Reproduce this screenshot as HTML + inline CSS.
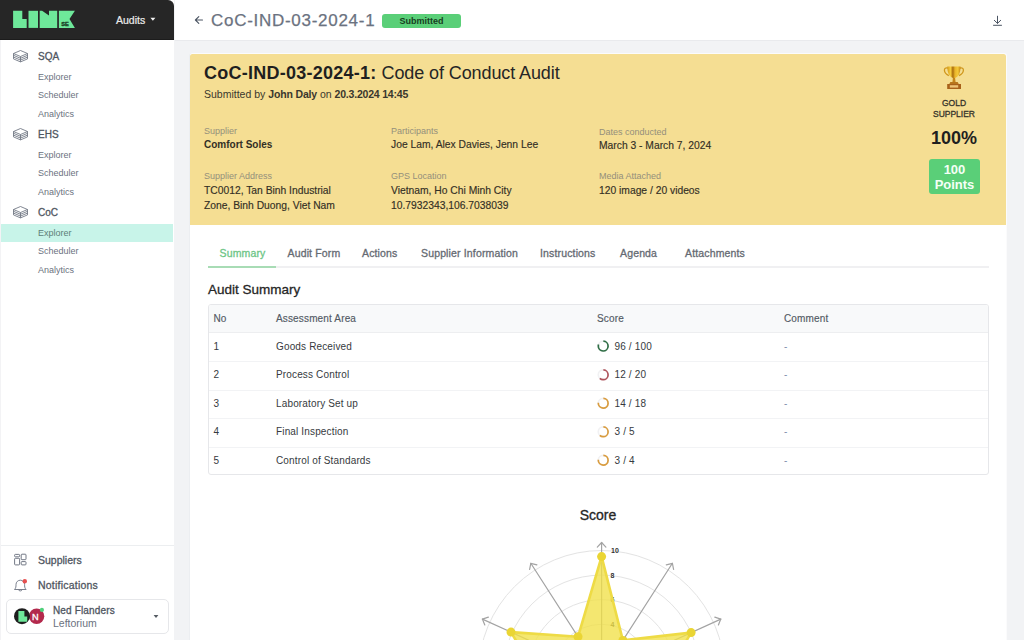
<!DOCTYPE html>
<html><head><meta charset="utf-8">
<style>
*{box-sizing:border-box;margin:0;padding:0}
html,body{width:1024px;height:640px;overflow:hidden;background:#f2f3f5;font-family:"Liberation Sans",sans-serif;position:relative}
.abs{position:absolute;white-space:nowrap}
#side{position:absolute;left:0;top:0;width:173.6px;height:640px;background:#fff;border-left:1px solid #f3f3f5}
#sidehead{position:absolute;left:-1px;top:0;width:174px;height:39.5px;background:#262626;border-bottom:1px solid #1c1c1c;border-top-right-radius:6px}
#topbar{position:absolute;left:175px;top:0;width:849px;height:41px;background:#fff;border-bottom:1px solid #e9eaed}
.grp{font-size:10px;color:#4f5661;-webkit-text-stroke:0.3px #4f5661}
.sub{font-size:9px;color:#6b7280}
#card{position:absolute;left:190px;top:54px;width:816px;height:171px;background:#f5de93;border-top-left-radius:2.5px;border-top-right-radius:2.5px}
#panel{position:absolute;left:189px;top:53px;width:818px;height:587px;background:#fbfbfc;border-left:1px solid #eceef1;border-top-left-radius:3px;border-top-right-radius:3px}
.lbl{font-size:9px;color:#948f7b}
.val{font-size:10.3px;color:#332f25;-webkit-text-stroke:0.15px #332f25}
.tab{font-size:10.5px;color:#656a72;letter-spacing:0.15px;-webkit-text-stroke:0.3px #656a72}
.th{font-size:10px;color:#535a64;letter-spacing:0.15px;-webkit-text-stroke:0.15px #535a64}
.td{font-size:10px;color:#363a40;letter-spacing:0.15px}
</style></head><body>

<div id="side">
  <div id="sidehead"></div>
</div>
<div id="topbar"></div>
<div id="panel"></div>
<div class="abs" style="left:190px;top:225px;width:816px;height:415px;background:#fff"></div>
<div id="card"></div>

<!-- logo -->
<svg class="abs" style="left:0;top:0" width="174" height="40" viewBox="0 0 174 40">
  <g fill="#6ee89a">
    <path d="M13.1,10.8 H22.3 V19 H26.7 V27.9 H13.1 Z"/>
    <rect x="28.5" y="10.8" width="9.5" height="17.1"/>
    <path d="M39.7,10.8 H42.1 L49,15.6 V10.8 H57.2 V27.9 H39.7 Z"/>
    <path d="M58.9,10.8 H74.9 L69.5,19 L74.9,27.9 H58.9 Z"/>
  </g>
  <text x="61.2" y="25.9" font-family="Liberation Sans" font-weight="bold" font-size="5.7" fill="#173a23" stroke="#173a23" stroke-width="0.35">SE</text>
  <text x="116" y="23.5" font-family="Liberation Sans" font-size="10.5" fill="#ececec" stroke="#ececec" stroke-width="0.2">Audits</text>
  <path d="M150.4,17.7 H155.4 L152.9,20.8 Z" fill="#f3f3f3"/>
</svg>

<!-- sidebar nav -->
<svg class="abs" style="left:13px;top:50px" width="16" height="14" viewBox="0 0 16 14"><g fill="none" stroke="#6b7280" stroke-width="0.85" stroke-linejoin="round"><path d="M7.5,0.5 L14.5,3.5 V8.9 L7.5,11.9 L0.5,8.9 V3.5 Z M0.5,3.5 L7.5,6.5 L14.5,3.5 M0.5,5.3 L7.5,8.3 L14.5,5.3 M0.5,7.1 L7.5,10.1 L14.5,7.1 M7.5,6.5 V11.9"/></g></svg>
<div class="abs grp" style="left:38px;top:51px">SQA</div>
<div class="abs sub" style="left:38px;top:71.7px">Explorer</div>
<div class="abs sub" style="left:38px;top:90.2px">Scheduler</div>
<div class="abs sub" style="left:38px;top:108.7px">Analytics</div>

<svg class="abs" style="left:13px;top:128px" width="16" height="14" viewBox="0 0 16 14"><g fill="none" stroke="#6b7280" stroke-width="0.85" stroke-linejoin="round"><path d="M7.5,0.5 L14.5,3.5 V8.9 L7.5,11.9 L0.5,8.9 V3.5 Z M0.5,3.5 L7.5,6.5 L14.5,3.5 M0.5,5.3 L7.5,8.3 L14.5,5.3 M0.5,7.1 L7.5,10.1 L14.5,7.1 M7.5,6.5 V11.9"/></g></svg>
<div class="abs grp" style="left:38px;top:129px">EHS</div>
<div class="abs sub" style="left:38px;top:149.7px">Explorer</div>
<div class="abs sub" style="left:38px;top:168.2px">Scheduler</div>
<div class="abs sub" style="left:38px;top:186.7px">Analytics</div>

<svg class="abs" style="left:13px;top:206px" width="16" height="14" viewBox="0 0 16 14"><g fill="none" stroke="#6b7280" stroke-width="0.85" stroke-linejoin="round"><path d="M7.5,0.5 L14.5,3.5 V8.9 L7.5,11.9 L0.5,8.9 V3.5 Z M0.5,3.5 L7.5,6.5 L14.5,3.5 M0.5,5.3 L7.5,8.3 L14.5,5.3 M0.5,7.1 L7.5,10.1 L14.5,7.1 M7.5,6.5 V11.9"/></g></svg>
<div class="abs grp" style="left:38px;top:207px">CoC</div>
<div class="abs" style="left:1px;top:224px;width:172.3px;height:18.2px;background:#c8f4e9"></div>
<div class="abs sub" style="left:38px;top:227.7px;color:#5d7f78">Explorer</div>
<div class="abs sub" style="left:38px;top:246.2px">Scheduler</div>
<div class="abs sub" style="left:38px;top:264.7px">Analytics</div>


<!-- sidebar bottom -->
<div class="abs" style="left:1px;top:545px;width:173px;height:1px;background:#eceef0"></div>
<svg class="abs" style="left:10px;top:550px" width="20" height="20" viewBox="10 550 20 20"><g fill="none" stroke="#6b7280" stroke-width="0.95"><rect x="14.6" y="554.4" width="5" height="2.4" rx="0.8"/><rect x="14.6" y="558.3" width="5" height="6.6" rx="0.8"/><rect x="21.2" y="554.2" width="4.8" height="5.5" rx="0.8"/><rect x="21.2" y="561.6" width="4.8" height="3.3" rx="0.8"/></g></svg>
<div class="abs grp" style="left:38px;top:554px;font-size:10.5px">Suppliers</div>
<svg class="abs" style="left:13px;top:578px" width="16" height="15" viewBox="0 0 16 15"><g fill="none" stroke="#6b7280" stroke-width="0.9" stroke-linejoin="round"><path d="M1.5,11.5 C3,10 3,8.5 3,6.5 C3,4 5,2.2 7.3,2.2 C9.6,2.2 11.6,4 11.6,6.5 C11.6,8.5 11.6,10 13.1,11.5 Z M5.6,11.8 C5.8,13.3 8.8,13.3 9,11.8"/></g><circle cx="11.8" cy="3.2" r="2.2" fill="#e65050"/></svg>
<div class="abs grp" style="left:38px;top:579px;font-size:10.5px;letter-spacing:0.22px">Notifications</div>
<div class="abs" style="left:6px;top:599px;width:163px;height:35px;border:1px solid #e6e7ea;border-radius:5px;background:#fff"></div>
<svg class="abs" style="left:12px;top:606px" width="40" height="20" viewBox="0 0 40 20">
  <circle cx="24.6" cy="10.2" r="7.7" fill="#b3294c"/>
  <circle cx="10" cy="10.2" r="8" fill="#1e1e1e"/>
  <path d="M6.4,5 H12.4 V10.4 H15.2 V15.8 H6.4 Z" fill="#6ee89a"/>
  <text x="23.2" y="13.6" text-anchor="middle" font-family="Liberation Sans" font-size="9.2" fill="#fff" stroke="#fff" stroke-width="0.3">N</text>
  <circle cx="29.9" cy="3.9" r="2.1" fill="#4fd07a"/>
</svg>
<div class="abs grp" style="left:53px;top:605px;letter-spacing:0.15px">Ned Flanders</div>
<div class="abs" style="left:53px;top:617px;font-size:10.5px;color:#6b7280">Leftorium</div>
<svg class="abs" style="left:152px;top:614px" width="8" height="5" viewBox="0 0 8 5"><path d="M1.6,1 H6.4 L4,4 Z" fill="#555b63"/></svg>

<!-- top bar -->
<svg class="abs" style="left:194px;top:15px" width="10" height="10" viewBox="0 0 10 10"><g fill="none" stroke="#4b5563" stroke-width="1.1" stroke-linecap="round" stroke-linejoin="round"><path d="M8.5,5 H1.5 M4.8,1.6 L1.4,5 L4.8,8.4"/></g></svg>
<div class="abs" style="left:211px;top:11px;font-size:17px;letter-spacing:0.72px;color:#6b7280;-webkit-text-stroke:0.25px #6b7280">CoC-IND-03-2024-1</div>
<div class="abs" style="left:382px;top:14px;width:79px;height:14px;background:#5acf78;border-radius:3px;font-size:9px;font-weight:bold;color:#183d22;text-align:center;line-height:14px">Submitted</div>
<svg class="abs" style="left:992px;top:15px" width="12" height="12" viewBox="0 0 12 12"><g fill="none" stroke="#4b5563" stroke-width="1" stroke-linecap="round" stroke-linejoin="round"><path d="M5.5,1.2 V8.2 M2.3,5.3 L5.5,8.4 L8.7,5.3 M1.5,10.3 H9.5"/></g></svg>

<!-- card -->
<div class="abs" style="left:204px;top:63px;font-size:18px;color:#1f1f1f"><b style="letter-spacing:0.25px">CoC-IND-03-2024-1:</b> <span style="letter-spacing:-0.1px;color:#262626">Code of Conduct Audit</span></div>
<div class="abs" style="left:204px;top:88px;font-size:10.5px;color:#3a372d">Submitted by <b style="letter-spacing:-0.15px">John Daly</b> on <b style="letter-spacing:-0.2px">20.3.2024 14:45</b></div>
<div class="abs lbl" style="left:204px;top:125.5px">Supplier</div>
<div class="abs val" style="left:204px;top:139px;font-weight:bold;font-size:10px;-webkit-text-stroke:0">Comfort Soles</div>
<div class="abs lbl" style="left:204px;top:171px">Supplier Address</div>
<div class="abs val" style="left:204px;top:183px;line-height:15.2px">TC0012, Tan Binh Industrial<br>Zone, Binh Duong, Viet Nam</div>

<div class="abs lbl" style="left:391px;top:125.5px">Participants</div>
<div class="abs val" style="left:391px;top:139px">Joe Lam, Alex Davies, Jenn Lee</div>
<div class="abs lbl" style="left:391px;top:171px">GPS Location</div>
<div class="abs val" style="left:391px;top:183px;line-height:15.2px">Vietnam, Ho Chi Minh City<br>10.7932343,106.7038039</div>

<div class="abs lbl" style="left:599px;top:126.5px">Dates conducted</div>
<div class="abs val" style="left:599px;top:140px">March 3 - March 7, 2024</div>
<div class="abs lbl" style="left:599px;top:171px">Media Attached</div>
<div class="abs val" style="left:599px;top:184.5px">120 image / 20 videos</div>

<svg class="abs" style="left:940px;top:62px" width="28" height="30" viewBox="940 62 28 30">
  <defs><linearGradient id="gold" x1="947.3" x2="960.5" y1="0" y2="0" gradientUnits="userSpaceOnUse"><stop offset="0" stop-color="#d49a18"/><stop offset="0.25" stop-color="#f6cd3e"/><stop offset="0.42" stop-color="#a86a0c"/><stop offset="0.58" stop-color="#e9b42a"/><stop offset="0.8" stop-color="#f4c93a"/><stop offset="1" stop-color="#c48612"/></linearGradient></defs>
  <path d="M948,68.2 C943.2,66.6 943,73 948.8,75.6" fill="none" stroke="#cf961c" stroke-width="1.3"/>
  <path d="M959.8,68.2 C964.6,66.6 964.8,73 959,75.6" fill="none" stroke="#cf961c" stroke-width="1.3"/>
  <path d="M947.3,66.4 H960.5 C960.5,73 958.6,77 954,78.3 C949.4,77 947.3,73 947.3,66.4 Z" fill="url(#gold)"/>
  <path d="M952.9,78 H955.1 L955.6,82.2 H952.4 Z" fill="#c4841a"/>
  <path d="M950.3,82 H957.7 L958.8,84.2 H949.2 Z" fill="#b8761c"/>
  <rect x="947.2" y="84" width="13.8" height="5" fill="#a9621a"/>
  <rect x="949.8" y="85.2" width="8.4" height="2.4" fill="#eec476"/>
</svg>
<div class="abs" style="left:904px;top:98px;width:100px;text-align:center;font-size:8.5px;line-height:11.3px;color:#35332a;-webkit-text-stroke:0.3px #35332a">GOLD<br>SUPPLIER</div>
<div class="abs" style="left:904px;top:127.7px;width:100px;text-align:center;font-size:18px;color:#1f1f1f;font-weight:bold">100%</div>
<div class="abs" style="left:929px;top:159px;width:51px;height:35px;background:#5acf78;border-radius:3px;text-align:center;font-size:13px;line-height:15.3px;padding-top:2.8px;color:#f4fff6;font-weight:bold">100<br>Points</div>

<!-- tabs -->
<div class="abs tab" style="left:219.5px;top:247px;color:#6cc585;-webkit-text-stroke:0.3px #6cc585">Summary</div>
<div class="abs tab" style="left:287.5px;top:247px">Audit Form</div>
<div class="abs tab" style="left:362px;top:247px">Actions</div>
<div class="abs tab" style="left:421px;top:247px">Supplier Information</div>
<div class="abs tab" style="left:540px;top:247px">Instructions</div>
<div class="abs tab" style="left:620px;top:247px">Agenda</div>
<div class="abs tab" style="left:685px;top:247px">Attachments</div>
<div class="abs" style="left:207.5px;top:266px;width:781px;height:1.5px;background:#f0f0f2"></div>
<div class="abs" style="left:207.5px;top:265.5px;width:68px;height:2px;background:#a8dcb5"></div>

<div class="abs" style="left:208px;top:282px;font-size:13.5px;color:#262626;-webkit-text-stroke:0.3px #262626">Audit Summary</div>

<!-- table -->
<div class="abs" style="left:207.5px;top:303.5px;width:781px;height:171px;border:1px solid #e6e7ea;border-radius:3px;overflow:hidden;background:#fff">
  <div style="position:absolute;left:0;top:0;width:100%;height:28.5px;background:#f8f9fa;border-bottom:1px solid #edeef0"></div>
  <div style="position:absolute;left:0;top:56.5px;width:100%;height:1px;background:#f2f3f5"></div>
  <div style="position:absolute;left:0;top:85px;width:100%;height:1px;background:#f2f3f5"></div>
  <div style="position:absolute;left:0;top:113.5px;width:100%;height:1px;background:#f2f3f5"></div>
  <div style="position:absolute;left:0;top:142px;width:100%;height:1px;background:#f2f3f5"></div>
</div>
<div class="abs th" style="left:213.5px;top:312.5px">No</div>
<div class="abs th" style="left:276px;top:312.5px">Assessment Area</div>
<div class="abs th" style="left:597px;top:312.5px">Score</div>
<div class="abs th" style="left:784px;top:312.5px">Comment</div>

<div class="abs td" style="left:213.5px;top:340.5px">1</div>
<div class="abs td" style="left:276px;top:340.5px">Goods Received</div>
<div class="abs td" style="left:614.5px;top:340.5px">96 / 100</div>
<div class="abs td" style="left:784px;top:340.5px;color:#7f90ad">-</div>
<div class="abs td" style="left:213.5px;top:369px">2</div>
<div class="abs td" style="left:276px;top:369px">Process Control</div>
<div class="abs td" style="left:614.5px;top:369px">12 / 20</div>
<div class="abs td" style="left:784px;top:369px;color:#7f90ad">-</div>
<div class="abs td" style="left:213.5px;top:397.5px">3</div>
<div class="abs td" style="left:276px;top:397.5px">Laboratory Set up</div>
<div class="abs td" style="left:614.5px;top:397.5px">14 / 18</div>
<div class="abs td" style="left:784px;top:397.5px;color:#7f90ad">-</div>
<div class="abs td" style="left:213.5px;top:426px">4</div>
<div class="abs td" style="left:276px;top:426px">Final Inspection</div>
<div class="abs td" style="left:614.5px;top:426px">3 / 5</div>
<div class="abs td" style="left:784px;top:426px;color:#7f90ad">-</div>
<div class="abs td" style="left:213.5px;top:454.5px">5</div>
<div class="abs td" style="left:276px;top:454.5px">Control of Standards</div>
<div class="abs td" style="left:614.5px;top:454.5px">3 / 4</div>
<div class="abs td" style="left:784px;top:454.5px;color:#7f90ad">-</div>

<svg class="abs" style="left:590px;top:333px" width="26" height="140" viewBox="590 333 26 140"><g fill="none" stroke-width="1.7">
<circle cx="603.2" cy="346.1" r="4.9" stroke="#f1f1f3"/><circle cx="603.2" cy="346.1" r="4.9" stroke="#2f6e45" stroke-dasharray="24.01 30.79" transform="rotate(-88 603.2 346.1)"/>
<circle cx="603.2" cy="374.8" r="4.9" stroke="#f1f1f3"/><circle cx="603.2" cy="374.8" r="4.9" stroke="#b0545c" stroke-dasharray="18.47 30.79" transform="rotate(-88 603.2 374.8)"/>
<circle cx="603.2" cy="403.2" r="4.9" stroke="#f1f1f3"/><circle cx="603.2" cy="403.2" r="4.9" stroke="#d99c3e" stroke-dasharray="22.78 30.79" transform="rotate(-88 603.2 403.2)"/>
<circle cx="603.2" cy="431.8" r="4.9" stroke="#f1f1f3"/><circle cx="603.2" cy="431.8" r="4.9" stroke="#d99c3e" stroke-dasharray="18.47 30.79" transform="rotate(-88 603.2 431.8)"/>
<circle cx="603.2" cy="460.2" r="4.9" stroke="#f1f1f3"/><circle cx="603.2" cy="460.2" r="4.9" stroke="#d99c3e" stroke-dasharray="22.78 30.79" transform="rotate(-88 603.2 460.2)"/>
</g></svg>

<!-- chart -->
<div class="abs" style="left:548px;top:507px;width:100px;text-align:center;font-size:14px;color:#262626;-webkit-text-stroke:0.3px #262626">Score</div>
<svg class="abs" style="left:190px;top:480px" width="816" height="160" viewBox="190 480 816 160">
  <g fill="none" stroke="#e3e3e3" stroke-width="1">
    <circle cx="601.6" cy="673.5" r="123"/>
    <circle cx="601.6" cy="673.5" r="98.4"/>
    <circle cx="601.6" cy="673.5" r="73.8"/>
    <circle cx="601.6" cy="673.5" r="49.2"/>
  </g>
  <g fill="none" stroke="#a3a3a3" stroke-width="1.2" stroke-linecap="round" stroke-linejoin="round"><path d="M601.6,673.5 L601.6,542.5"/><path d="M605.9,547.1 L601.6,542.5 L597.3,547.1"/><path d="M601.6,673.5 L672.4,563.3"/><path d="M673.6,569.5 L672.4,563.3 L666.3,564.8"/><path d="M601.6,673.5 L720.8,619.1"/><path d="M718.4,624.9 L720.8,619.1 L714.8,617.1"/><path d="M601.6,673.5 L482.4,619.1"/><path d="M488.4,617.1 L482.4,619.1 L484.8,624.9"/><path d="M601.6,673.5 L530.8,563.3"/><path d="M536.9,564.8 L530.8,563.3 L529.6,569.5"/></g>
  <g font-family="Liberation Sans" font-size="7" font-weight="bold" fill="#333">
    <text x="611" y="553">10</text>
    <text x="610.5" y="577.5">8</text>
    <text x="610.5" y="602">6</text>
    <text x="610.5" y="626.5">4</text>
  </g>
  <polygon points="601.6,556.6 622.9,640.4 691.1,632.6 662.5,682.3 638.8,705.7 615.5,720.7 587.7,720.7 564.4,705.7 540.7,682.3 511.0,632.1 578.0,636.8" fill="rgba(241,224,72,0.78)" stroke="#eedb45" stroke-width="2.6" stroke-linejoin="round"/>
  <g fill="#ead534">
    <circle cx="601.6" cy="556.6" r="4.5"/>
    <circle cx="622.9" cy="640.4" r="4.5"/>
    <circle cx="691.1" cy="632.6" r="4.5"/>
    <circle cx="511.0" cy="632.1" r="4.5"/>
    <circle cx="578.0" cy="636.8" r="4.5"/>
  </g>
</svg>

</body></html>
